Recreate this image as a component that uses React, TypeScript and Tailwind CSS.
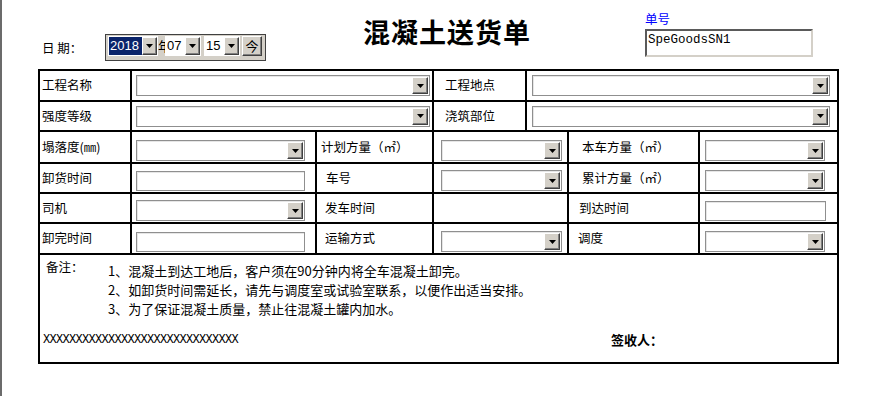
import React from 'react';

const DropBtn = ({ size = 'w-[16px] h-[17px]' }: { size?: string }) => (
  <span
    className={`${size} flex items-center justify-center bg-[#d4d0c8] border border-t-white border-l-white border-r-[#404040] border-b-[#404040] shadow-[inset_-1px_-1px_0_#808080]`}
  >
    <svg width="7" height="4" viewBox="0 0 7 4">
      <path d="M0 0h7L3.5 4z" fill="#000" />
    </svg>
  </span>
);

const Select = ({ w }: { w: string }) => (
  <div
    className={`${w} h-[21px] flex items-center justify-end pr-[1px] bg-white border border-[#8f8f8f] shadow-[inset_1px_1px_0_#e6e6e6]`}
  >
    <DropBtn />
  </div>
);

const Input = ({ w }: { w: string }) => (
  <input
    type="text"
    readOnly
    className={`${w} h-[20px] bg-white border border-[#8f8f8f] shadow-[inset_1px_1px_0_#e6e6e6] outline-none`}
  />
);

const PickSelect = ({ value }: { value: string }) => (
  <div className="w-[36px] h-[20px] flex bg-white p-[1px]">
    <span className="flex-1 pl-[1px] text-[13px] leading-[18px] font-['Liberation_Sans',sans-serif]">
      {value}
    </span>
    <DropBtn size="w-[15px] h-[18px]" />
  </div>
);

const cellL = 'flex items-center border-l-2 border-black';
const cellC = 'flex items-end pb-[1px] border-l-2 border-black';

const App = () => {
  return (
    <div className="w-[877px] h-[396px] bg-white border-l-2 border-[#6b6b6b] text-black text-[12.5px] font-['Noto_Sans_CJK_SC',sans-serif]">
      {/* header */}
      <div className="flex h-[69px]">
        <div className="flex items-center ml-[40px] mt-[34px] h-[27px]">
          <span className="w-[63px] leading-[16px]">日 期：</span>
          <div className="flex items-start w-[161px] h-[27px] pl-[2px] pt-[1px] bg-[#d4d0c8] border border-[#404040]">
            <div className="w-[50px] h-[20px] flex bg-white p-[1px]">
              <span className="flex-1 bg-[#0a246a] text-white text-[13px] leading-[18px] pl-[1px] font-['Liberation_Sans',sans-serif]">
                2018
              </span>
              <DropBtn size="w-[15px] h-[18px]" />
            </div>
            <div className="w-[7px] h-[20px] overflow-hidden">
              <span className="block w-[13px] text-[13px] leading-[20px]">年</span>
            </div>
            <PickSelect value="07" />
            <div className="ml-[3px]">
              <PickSelect value="15" />
            </div>
            <button className="ml-[2px] w-[20px] h-[20px] flex items-center justify-center bg-[#d4d0c8] border border-t-white border-l-white border-r-[#404040] border-b-[#404040] shadow-[inset_-1px_-1px_0_#808080] text-[13px] leading-[14px]">
              今
            </button>
          </div>
        </div>
        <div className="ml-[97px] mt-[18px] w-[170px] text-[27px] leading-[27px] tracking-[1px] font-semibold whitespace-nowrap">
          混凝土送货单
        </div>
        <div className="ml-[112px] mt-[10px] flex flex-col">
          <span className="text-[#0000ff] leading-[17px]">单号</span>
          <div className="mt-[2px] w-[168px] h-[28px] pl-[1px] pt-[1px] bg-white border-2 border-t-[#5a5a5a] border-l-[#5a5a5a] border-r-[#d4d0c8] border-b-[#d4d0c8] text-[12.5px] leading-[16px] font-['Liberation_Mono',monospace]">
            SpeGoodsSN1
          </div>
        </div>
      </div>

      {/* form table */}
      <div className="ml-[36px] w-[801px] border-2 border-black flex flex-col">
        <div className="flex h-[29px]">
          <div className="w-[90px] flex items-center pl-[2px]">工程名称</div>
          <div className={`w-[302px] pl-[4px] ${cellL}`}><Select w="w-[294px]" /></div>
          <div className={`w-[93px] pl-[11px] ${cellL}`}>工程地点</div>
          <div className={`w-[312px] pl-[5px] ${cellL}`}><Select w="w-[298px]" /></div>
        </div>
        <div className="flex h-[30px] border-t-2 border-black">
          <div className="w-[90px] flex items-center pl-[2px]">强度等级</div>
          <div className={`w-[302px] pl-[4px] ${cellL}`}><Select w="w-[294px]" /></div>
          <div className={`w-[93px] pl-[11px] ${cellL}`}>浇筑部位</div>
          <div className={`w-[312px] pl-[5px] ${cellL}`}><Select w="w-[298px]" /></div>
        </div>
        <div className="flex h-[32px] border-t-2 border-black">
          <div className="w-[90px] flex items-center pl-[2px]">塌落度(㎜)</div>
          <div className={`w-[185px] pl-[4px] ${cellC}`}><Select w="w-[169px]" /></div>
          <div className={`w-[117px] pl-[4px] ${cellL}`}>计划方量（㎡）</div>
          <div className={`w-[135px] pl-[7px] ${cellC}`}><Select w="w-[121px]" /></div>
          <div className={`w-[131px] pl-[13px] ${cellL}`}>本车方量（㎡）</div>
          <div className={`w-[139px] pl-[5px] ${cellC}`}><Select w="w-[120px]" /></div>
        </div>
        <div className="flex h-[30px] border-t-2 border-black">
          <div className="w-[90px] flex items-center pl-[2px]">卸货时间</div>
          <div className={`w-[185px] pl-[4px] ${cellC}`}><Input w="w-[169px]" /></div>
          <div className={`w-[117px] pl-[9px] ${cellL}`}>车号</div>
          <div className={`w-[135px] pl-[7px] ${cellC}`}><Select w="w-[121px]" /></div>
          <div className={`w-[131px] pl-[13px] ${cellL}`}>累计方量（㎡）</div>
          <div className={`w-[139px] pl-[5px] ${cellC}`}><Select w="w-[120px]" /></div>
        </div>
        <div className="flex h-[30px] border-t-2 border-black">
          <div className="w-[90px] flex items-center pl-[2px]">司机</div>
          <div className={`w-[185px] pl-[4px] ${cellC}`}><Select w="w-[169px]" /></div>
          <div className={`w-[117px] pl-[8px] ${cellL}`}>发车时间</div>
          <div className={`w-[135px] ${cellC}`} />
          <div className={`w-[131px] pl-[10px] ${cellL}`}>到达时间</div>
          <div className={`w-[139px] pl-[5px] ${cellC}`}><Input w="w-[121px]" /></div>
        </div>
        <div className="flex h-[31px] border-t-2 border-black">
          <div className="w-[90px] flex items-center pl-[2px]">卸完时间</div>
          <div className={`w-[185px] pl-[4px] ${cellC}`}><Input w="w-[169px]" /></div>
          <div className={`w-[117px] pl-[8px] ${cellL}`}>运输方式</div>
          <div className={`w-[135px] pl-[7px] ${cellC}`}><Select w="w-[121px]" /></div>
          <div className={`w-[131px] pl-[9px] ${cellL}`}>调度</div>
          <div className={`w-[139px] pl-[5px] ${cellC}`}><Select w="w-[120px]" /></div>
        </div>

        {/* notes */}
        <div className="h-[109px] border-t-2 border-black flex flex-col">
          <div className="flex">
            <span className="w-[68px] pl-[6px] pt-[2px] leading-[19px]">备注：</span>
            <div className="pt-[6px] text-[13px] leading-[19px] whitespace-nowrap">
              <p>1、混凝土到达工地后，客户须在90分钟内将全车混凝土卸完。</p>
              <p>2、如卸货时间需延长，请先与调度室或试验室联系，以便作出适当安排。</p>
              <p>3、为了保证混凝土质量，禁止往混凝土罐内加水。</p>
            </div>
          </div>
          <div className="flex items-center h-[20px] mt-[12px]">
            <span className="w-[571px] pl-[3px] text-[12px] tracking-[-0.7px] font-['Liberation_Mono',monospace]">
              XXXXXXXXXXXXXXXXXXXXXXXXXXXXXX
            </span>
            <span className="text-[13px] font-bold">签收人：</span>
          </div>
        </div>
      </div>
    </div>
  );
};

export default App;
